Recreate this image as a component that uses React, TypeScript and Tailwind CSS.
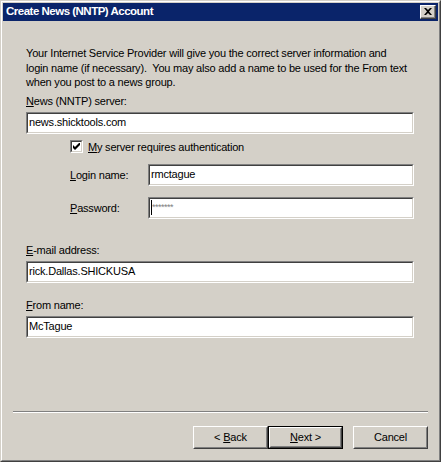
import React from 'react';

const font = { fontFamily: '"Liberation Sans", Arial, sans-serif' };

function Field({ value, className = '', password = false }: { value: string; className?: string; password?: boolean }) {
  return (
    <div className={`h-[22px] border border-t-[#808080] border-l-[#808080] border-b-white border-r-white ${className}`}>
      <div className="flex h-full items-center border border-t-[#404040] border-l-[#404040] border-b-[#d4d0c8] border-r-[#d4d0c8] bg-white pl-[1px]">
        {password ? (
          <span className="flex items-center">
            <span className="h-[15px] w-px bg-black" />
            <span className="text-[9px] leading-none tracking-[-0.5px] text-[#808080]">*******</span>
          </span>
        ) : (
          <span className="text-[11px] leading-none tracking-[-0.2px] text-black">{value}</span>
        )}
      </div>
    </div>
  );
}

function Label({ children, className = '' }: { children: React.ReactNode; className?: string }) {
  return <div className={`text-[11px] leading-[14px] tracking-[-0.2px] text-black ${className}`}>{children}</div>;
}

function Button({ children, isDefault = false, className = '' }: { children: React.ReactNode; isDefault?: boolean; className?: string }) {
  return (
    <div className={`h-[23px] w-[75px] ${isDefault ? 'border border-black' : ''} ${className}`}>
      <div className="flex h-full items-center justify-center border border-t-white border-l-white border-b-[#404040] border-r-[#404040]">
        <div className="flex h-full w-full items-center justify-center border border-t-[#d4d0c8] border-l-[#d4d0c8] border-b-[#808080] border-r-[#808080] text-[11px] tracking-[-0.2px] text-black">
          <span className="whitespace-pre">{children}</span>
        </div>
      </div>
    </div>
  );
}

export default function App() {
  return (
    <div style={font} className="h-[462px] w-[441px] bg-[#d4d0c8]">
      <div className="h-full border border-t-[#d4d0c8] border-l-[#d4d0c8] border-b-[#404040] border-r-[#404040]">
        <div className="flex h-full flex-col border border-t-white border-l-white border-b-[#808080] border-r-[#808080] p-px">
          {/* title bar */}
          <div className="flex h-[18px] items-center justify-between bg-[#0a246a] pl-[3px] pr-[2px]">
            <span className="text-[11.5px] font-bold leading-none tracking-[-0.5px] text-white">Create News (NNTP) Account</span>
            <div className="h-[14px] w-[16px] border border-t-white border-l-white border-b-[#404040] border-r-[#404040] bg-[#d4d0c8]">
              <div className="flex h-full w-full items-center justify-center border-b border-r border-b-[#808080] border-r-[#808080]">
                <svg width="8" height="7" viewBox="0 0 8 7">
                  <path d="M0 0h2l2 2 2-2h2L5 3.5 8 7H6L4 5 2 7H0l3-3.5z" fill="black" />
                </svg>
              </div>
            </div>
          </div>

          {/* body */}
          <div className="flex flex-1 flex-col pl-[23px] pr-[24px] pt-[25px]">
            <p className="whitespace-nowrap text-[11px] leading-[14.5px] tracking-[-0.2px] text-black">
              Your Internet Service Provider will give you the correct server information and
              <br />
              login name (if necessary).&nbsp; You may also add a name to be used for the From text
              <br />
              when you post to a news group.
            </p>

            <Label className="mt-[4px]">
              <u>N</u>ews (NNTP) server:
            </Label>
            <Field value="news.shicktools.com" className="mt-[4px]" />

            <div className="ml-[44px] mt-[6px] flex items-center gap-[5px]">
              <div className="h-[13px] w-[13px] border border-t-[#808080] border-l-[#808080] border-b-white border-r-white">
                <div className="flex h-full w-full items-center justify-center border border-t-[#404040] border-l-[#404040] border-b-[#d4d0c8] border-r-[#d4d0c8] bg-white">
                  <svg width="7" height="7" viewBox="0 0 7 7">
                    <path d="M0 2v3l2 2 5-5V-1L2 4z" fill="black" />
                  </svg>
                </div>
              </div>
              <Label>
                <u>M</u>y server requires authentication
              </Label>
            </div>

            <div className="ml-[44px] mt-[10px] flex items-center">
              <Label className="w-[78px]">
                <u>L</u>ogin name:
              </Label>
              <Field value="rmctague" className="flex-1" />
            </div>

            <div className="ml-[44px] mt-[11px] flex items-center">
              <Label className="w-[78px]">
                <u>P</u>assword:
              </Label>
              <Field value="" password className="flex-1" />
            </div>

            <Label className="mt-[24px]">
              <u>E</u>-mail address:
            </Label>
            <Field value="rick.Dallas.SHICKUSA" className="mt-[4px]" />

            <Label className="mt-[15px]">
              <u>F</u>rom name:
            </Label>
            <Field value="McTague" className="mt-[4px]" />

            <div className="mt-auto" />
          </div>

          <div className="mx-[10px] border-t border-b border-t-[#808080] border-b-white" />
          <div className="flex justify-end pb-[10px] pr-[10px] pt-[13px]">
            <Button>
              {'< '}
              <u>B</u>ack
            </Button>
            <Button isDefault>
              <u>N</u>ext{' >'}
            </Button>
            <Button className="ml-[10px]">Cancel</Button>
          </div>
        </div>
      </div>
    </div>
  );
}
